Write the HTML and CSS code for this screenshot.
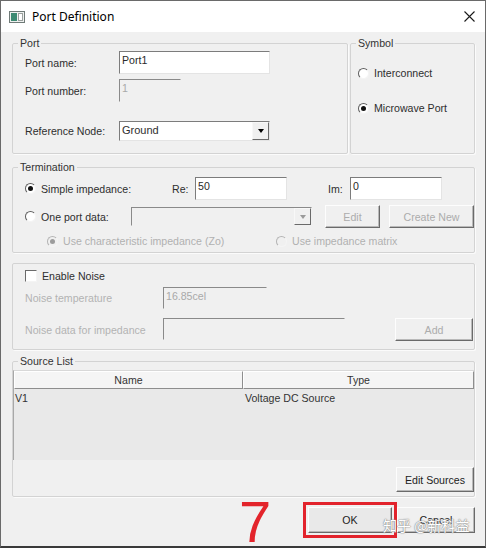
FILE: index.html
```html
<!DOCTYPE html>
<html>
<head>
<meta charset="utf-8">
<title>Port Definition</title>
<link rel="stylesheet" href="styles.css">
</head>
<body>
<div class="window">
  <div class="titlebar">
    <svg class="app-icon" width="16" height="12" viewBox="0 0 16 12">
      <rect x="0.5" y="0.5" width="15" height="11" fill="#eef0ef" stroke="#6f7a77"/>
      <rect x="2" y="2" width="6" height="8" fill="#3d8a72"/>
      <rect x="9.5" y="2.5" width="4" height="7" fill="#ffffff" stroke="#9aa09e"/>
    </svg>
    <span class="title">Port Definition</span>
    <svg class="close" width="11" height="11" viewBox="0 0 11 11">
      <path d="M0.5 0.5 L10.5 10.5 M10.5 0.5 L0.5 10.5" stroke="#1a1a1a" stroke-width="1.1" fill="none"/>
    </svg>
  </div>

  <div class="content">
    <div class="top-row">
      <fieldset class="group port-group">
        <legend>Port</legend>
        <div class="prow r1"><span class="plabel">Port name:</span><div class="field w151">Port1</div></div>
        <div class="prow r2"><span class="plabel">Port number:</span><div class="field disabled w62">1</div></div>
        <div class="prow r3"><span class="plabel">Reference Node:</span>
          <div class="select w151"><span class="sel-text">Ground</span><span class="arrow"><i class="tri"></i></span></div>
        </div>
      </fieldset>
      <fieldset class="group symbol-group">
        <legend>Symbol</legend>
        <div class="opt s1"><span class="radio"></span>Interconnect</div>
        <div class="opt s2"><span class="radio on"></span>Microwave Port</div>
      </fieldset>
    </div>

    <fieldset class="group term-group">
      <legend>Termination</legend>
      <div class="trow t1">
        <div class="opt tcol1"><span class="radio on"></span>Simple impedance:</div>
        <span class="re">Re:</span>
        <div class="field w92">50</div>
        <span class="im">Im:</span>
        <div class="field w92">0</div>
      </div>
      <div class="trow t2">
        <div class="opt tcol2"><span class="radio"></span>One port data:</div>
        <div class="select disabled w181"><span class="sel-text"></span><span class="arrow"><i class="tri"></i></span></div>
        <div class="btn disabled edit">Edit</div>
        <div class="btn disabled create">Create New</div>
      </div>
      <div class="trow t3">
        <div class="opt dis tcol3"><span class="radio on dis"></span>Use characteristic impedance (Zo)</div>
        <div class="opt dis"><span class="radio dis"></span>Use impedance matrix</div>
      </div>
    </fieldset>

    <fieldset class="group noise-group">
      <div class="nrow n1"><span class="check"></span>Enable Noise</div>
      <div class="nrow n2"><span class="nlabel">Noise temperature</span><div class="field disabled w104">16.85cel</div></div>
      <div class="nrow n3"><span class="nlabel">Noise data for impedance</span><div class="field disabled w182"></div><div class="btn disabled add">Add</div></div>
    </fieldset>

    <fieldset class="group source-group">
      <legend>Source List</legend>
      <div class="listview">
        <div class="lv-head">
          <div class="lv-h name">Name</div>
          <div class="lv-h type">Type</div>
        </div>
        <div class="lv-row">
          <div class="lv-c name">V1</div>
          <div class="lv-c type">Voltage DC Source</div>
        </div>
      </div>
      <div class="src-actions"><div class="btn edit-src">Edit Sources</div></div>
    </fieldset>

    <div class="footer">
      <span class="mark7">7</span>
      <div class="btn ok">OK</div>
      <div class="btn cancel">Cancel</div>
      <span class="watermark">知乎 @新科益</span>
    </div>
  </div>
</div>
</body>
</html>
```
FILE: styles.css
```css
* { box-sizing: border-box; }
html, body { margin: 0; padding: 0; }
body {
  width: 486px;
  height: 548px;
  overflow: hidden;
  background: #f0f0f0;
  font-family: "Liberation Sans", Arial, sans-serif;
  font-size: 10.6px;
  color: #2e2e2e;
}
.window {
  width: 486px;
  height: 548px;
  border: 1px solid #6a6a6a;
  border-bottom: 2px solid #3a3a3a;
  background: #f0f0f0;
  display: flex;
  flex-direction: column;
}
.titlebar {
  height: 31px;
  flex-shrink: 0;
  background: #ffffff;
  display: flex;
  align-items: center;
  padding: 0 10px 0 8px;
}
.app-icon { display: block; margin-right: 7px; }
.title {
  font-family: "Noto Sans", "Liberation Sans", sans-serif;
  font-size: 12px;
  color: #000;
}
.close { display: block; margin-left: auto; }

.content {
  flex: 1;
  display: flex;
  flex-direction: column;
  padding: 5px 10px 0 11px;
}

/* group boxes */
fieldset.group {
  margin: 0;
  min-width: 0;
  border: 1px solid #d3d3d3;
  border-radius: 2px;
  box-shadow: 1px 1px 0 #fbfbfb;
}
fieldset.group legend {
  margin-left: 5px;
  padding: 0 2px;
  line-height: 13px;
  color: #333;
}

.top-row { display: flex; }
.port-group { flex: 0 0 336px; padding: 1px 0 12px 12px; }
.port-group legend, .term-group legend { margin-left: -7px !important; }
.symbol-group { flex: 1; margin-left: 2px !important; padding: 0 0 0 7px; }
.symbol-group legend { margin-left: -2px !important; }

.prow { display: flex; align-items: center; }
.prow.r1 { height: 23px; }
.prow.r2 { height: 23px; margin-top: 5px; }
.prow.r3 { height: 20px; margin-top: 19px; }
.plabel { width: 94px; }

/* inputs */
.field {
  height: 100%;
  background: #ffffff;
  border: 1px solid;
  border-color: #7c7c7c #e4e4e4 #e4e4e4 #7c7c7c;
  padding: 2px 2px 0;
  line-height: 13px;
  color: #2a2a2a;
}
.field.disabled {
  background: transparent;
  border-color: #8a8a8a #f0f0f0 #f0f0f0 #8a8a8a;
  color: #a9a9a9;
}
.w151 { width: 151px; }
.w62 { width: 62px; }
.w92 { width: 92px; }
.w104 { width: 104px; }
.w181 { width: 181px; }
.w182 { width: 182px; }

.select {
  height: 100%;
  display: flex;
  background: #ffffff;
  border: 1px solid;
  border-color: #7c7c7c #e4e4e4 #e4e4e4 #7c7c7c;
}
.select.disabled { background: transparent; border-color: #8a8a8a #f0f0f0 #f0f0f0 #8a8a8a; }
.sel-text { flex: 1; padding: 2px 0 0 2px; line-height: 13px; font-size: 11px; }
.arrow {
  width: 17px;
  display: flex;
  align-items: center;
  justify-content: center;
  background: #f0f0f0;
  border: 1px solid;
  border-color: #f8f8f8 #6a6a6a #6a6a6a #f8f8f8;
}
.tri {
  display: block;
  width: 0; height: 0;
  border-left: 3.5px solid transparent;
  border-right: 3.5px solid transparent;
  border-top: 4px solid #000;
}
.select.disabled .tri { border-top-color: #9a9a9a; }

/* radios & checks */
.opt { display: flex; align-items: center; height: 14px; }
.opt.dis { color: #b0b0b0; }
.radio {
  position: relative;
  width: 11px; height: 11px;
  margin-right: 5px;
  flex-shrink: 0;
  border-radius: 50%;
  background: #ffffff;
  border: 1px solid;
  border-color: #5e5e5e #f4f4f4 #f4f4f4 #5e5e5e;
}
.radio.on::after {
  content: "";
  position: absolute;
  left: 2px; top: 2px;
  width: 5px; height: 5px;
  border-radius: 50%;
  background: #111;
}
.radio.dis { background: #f0f0f0; border-color: #b4b4b4 #f4f4f4 #f4f4f4 #b4b4b4; }
.radio.dis.on::after { background: #9c9c9c; }
.check {
  width: 12px; height: 12px;
  margin-right: 5px;
  background: #fff;
  border: 1px solid;
  border-color: #6a6a6a #f4f4f4 #f4f4f4 #6a6a6a;
}

.symbol-group .s1 { margin-top: 16px; }
.symbol-group .s2 { margin-top: 21px; }

/* termination */
.term-group { margin-top: 7px !important; padding: 3px 0 4px 12px; }
.trow { display: flex; align-items: center; }
.trow.t1 { height: 23px; }
.trow.t2 { height: 23px; margin-top: 5px; }
.trow.t3 { height: 14px; margin-top: 6px; padding-left: 22px; }
.tcol1 { width: 147px; }
.tcol2 { width: 106px; }
.tcol3 { width: 229px; }
.re { width: 23px; }
.im { width: 22px; margin-left: 41px; }
.t2 .select { height: 19px; }

.btn {
  height: 100%;
  display: flex;
  align-items: center;
  justify-content: center;
  background: #f0f0f0;
  border: 1px solid;
  border-color: #fdfdfd #6a6a6a #6a6a6a #fdfdfd;
  box-shadow: inset -1px -1px 0 #b9b9b9;
  color: #222;
}
.btn.disabled { color: #acacac; }
.edit { width: 55px; margin-left: 13px; }
.create { width: 85px; margin-left: 9px; }

/* noise */
.noise-group { margin-top: 10px !important; padding: 5px 0 8px 12px; }
.nrow { display: flex; align-items: center; }
.nrow.n1 { height: 14px; }
.nrow.n2 { height: 22px; margin-top: 4px; }
.nrow.n3 { height: 23px; margin-top: 9px; }
.nlabel { width: 138px; color: #b3b3b3; }
.n3 .field { height: 22px; align-self: flex-start; }
.add { width: 78px; margin-left: 50px; }

/* source list */
.source-group { margin-top: 5px !important; padding: 2px 0 4px 0; }
.listview {
  height: 90px;
  background: #e9e9e9;
  border-left: 1px solid #a8a8a8;
  border-top: 1px solid #d8d8d8;
}
.lv-head { display: flex; height: 18px; }
.lv-h {
  display: flex;
  align-items: center;
  justify-content: center;
  background: #f5f5f5;
  border: 1px solid;
  border-color: #ffffff #8e8e8e #8e8e8e #ffffff;
  color: #333;
}
.lv-h.name { width: 229px; }
.lv-h.type { flex: 1; }
.lv-row { display: flex; height: 17px; align-items: center; }
.lv-c { padding-left: 1px; color: #333; }
.lv-c.name { width: 230px; }
.src-actions { display: flex; justify-content: flex-end; margin-top: 7px; }
.edit-src { width: 78px; height: 25px; margin-right: 0; }

/* footer */
.footer {
  position: relative;
  display: flex;
  justify-content: flex-end;
  margin-top: 10px;
  height: 26px;
}
.ok {
  width: 84px;
  background: #e9e9e9;
  outline: 3px solid #e2232c;
  outline-offset: 2px;
}
.cancel { width: 78px; margin-left: 5px; }
.mark7 {
  position: absolute;
  left: 227px;
  top: -7px;
  font-family: "Liberation Sans", Arial, sans-serif;
  font-size: 58px;
  line-height: 44px;
  color: #e3242b;
}
.watermark {
  position: absolute;
  left: 371px;
  top: 10px;
  font-family: "Noto Sans CJK SC", sans-serif;
  font-size: 14px;
  line-height: 16px;
  color: #ffffff;
  text-shadow: 0 0 1px #8a8a8a, 0 0 1px #8a8a8a, 0 0 2px #a0a0a0;
  white-space: nowrap;
}
```
